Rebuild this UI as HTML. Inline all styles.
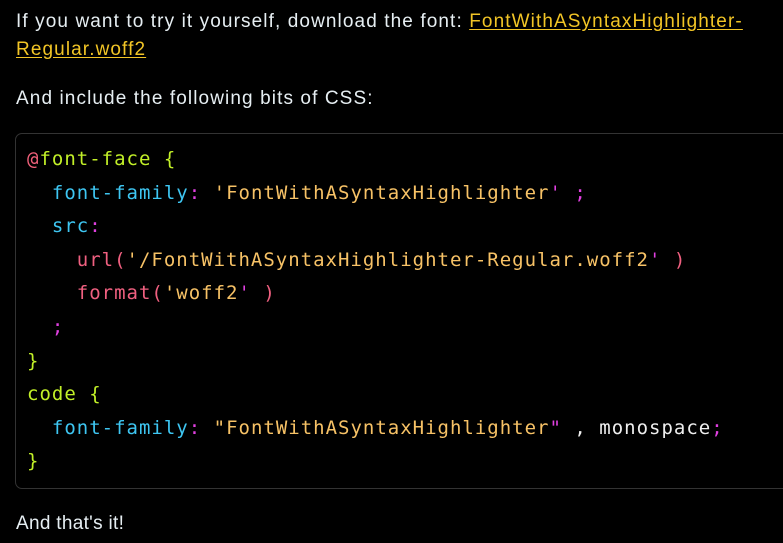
<!DOCTYPE html>
<html><head><meta charset="utf-8"><style>
html,body{margin:0;background:#000;width:783px;height:543px;overflow:hidden}
body{font-family:"Liberation Sans",sans-serif;font-size:19px;letter-spacing:1.1px;color:#e6eef2;}
p{position:absolute;left:16px;margin:0;line-height:28px;white-space:nowrap}
a{color:#f2c526;text-decoration:underline;text-underline-offset:2px}
.box{position:absolute;left:15px;top:133px;width:800px;height:356px;border:1px solid #333;border-radius:7px;box-sizing:border-box}
pre{position:absolute;left:27px;top:143px;margin:0;font-family:"DejaVu Sans Mono",monospace;font-size:19px;letter-spacing:1px;line-height:33.6px;color:#eee}
.at{color:#f0607a}.k{color:#c2f028}.p{color:#3ec6f2}.s{color:#f7c266}.m{color:#e040e0}.f{color:#f06080}
</style></head><body>
<p style="top:8px">If you want to try it yourself, download the font: <a>FontWithASyntaxHighlighter-</a></p>
<p style="top:36px"><a>Regular.woff2</a></p>
<p style="top:85px">And include the following bits of CSS:</p>
<div class="box"></div>
<pre><span class="at">@</span><span class="k">font-face {</span>
  <span class="p">font-family</span><span class="m">:</span> <span class="s">'FontWithASyntaxHighlighter</span><span class="m">' ;</span>
  <span class="p">src</span><span class="m">:</span>
    <span class="f">url(</span><span class="s">'/FontWithASyntaxHighlighter-Regular.woff2</span><span class="m">'</span> <span class="f">)</span>
    <span class="f">format(</span><span class="s">'woff2</span><span class="m">'</span> <span class="f">)</span>
  <span class="m">;</span>
<span class="k">}</span>
<span class="k">code {</span>
  <span class="p">font-family</span><span class="m">:</span> <span class="s">"FontWithASyntaxHighlighter</span><span class="m">"</span> , monospace<span class="m">;</span>
<span class="k">}</span></pre>
<p style="top:510px;letter-spacing:0.3px">And that's it!</p>
</body></html>
